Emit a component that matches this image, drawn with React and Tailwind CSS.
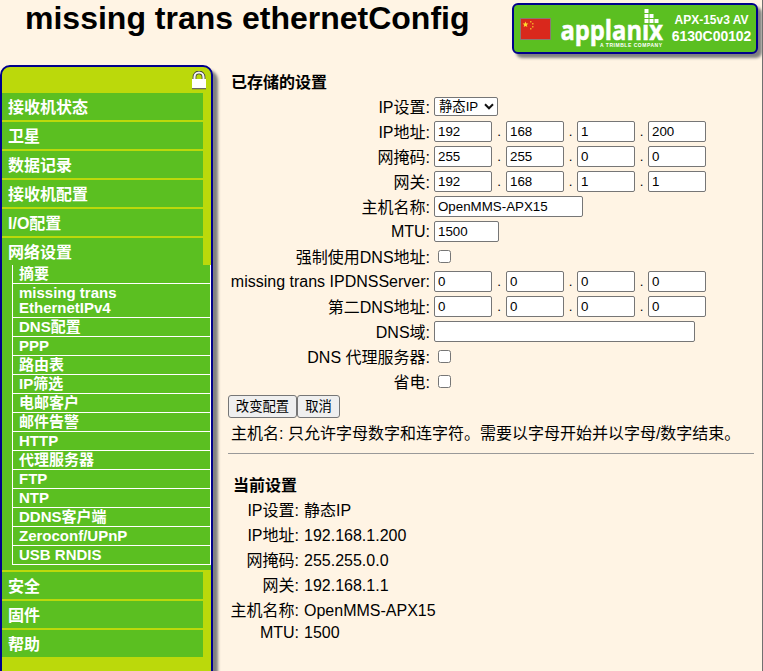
import React from "react";

const topItems = ["接收机状态", "卫星", "数据记录", "接收机配置", "I/O配置"];
const subItems = [
  "摘要",
  "missing trans EthernetIPv4",
  "DNS配置",
  "PPP",
  "路由表",
  "IP筛选",
  "电邮客户",
  "邮件告警",
  "HTTP",
  "代理服务器",
  "FTP",
  "NTP",
  "DDNS客户端",
  "Zeroconf/UPnP",
  "USB RNDIS",
];
const bottomItems = ["安全", "固件", "帮助"];

function Logo() {
  return (
    <svg className="block h-[42px] w-[106px] shrink-0 overflow-visible" viewBox="0 0 106 42" fill="#fff" aria-label="applanix">
      <text x="0.5" y="33.5" fontFamily="'Open Sans', sans-serif" fontWeight="700" fontSize="26" textLength="102.5" lengthAdjust="spacingAndGlyphs" stroke="#fff" strokeWidth="0.5">
        applanıx
      </text>
      <rect x="84.5" y="3" width="4" height="4" />
      <rect x="84.5" y="8" width="4" height="4" />
      <rect x="89.5" y="8" width="4" height="4" />
      <rect x="84.5" y="13" width="4" height="4" />
      <rect x="89.5" y="13" width="4" height="4" />
      <rect x="94.5" y="13" width="4" height="4" />
      <text x="40" y="40.5" fontFamily="'Liberation Sans', sans-serif" fontWeight="700" fontSize="5" textLength="62">
        A TRIMBLE COMPANY
      </text>
    </svg>
  );
}

function Flag() {
  return (
    <svg className="block h-[22px] w-[31px] shrink-0" viewBox="0 0 31 22">
      <rect x="0.5" y="0.5" width="30" height="21" fill="#d9281c" stroke="#8a7a72" />
      <path d="M5.5 3.5l.8 2 2.1.1-1.6 1.4.5 2.1-1.8-1.2-1.8 1.2.5-2.1-1.6-1.4 2.1-.1z" fill="#ffd92e" />
      <g fill="#f3a526">
        <rect x="10" y="3" width="1.5" height="1.5" />
        <rect x="12" y="5" width="1.5" height="1.5" />
        <rect x="12" y="8" width="1.5" height="1.5" />
        <rect x="10" y="10" width="1.5" height="1.5" />
      </g>
    </svg>
  );
}

function Lock() {
  return (
    <svg className="block h-[19px] w-[16px]" viewBox="0 0 16 19">
      <path d="M3.5 9V6a4.5 4.5 0 0 1 9 0v3" fill="none" stroke="#333" strokeWidth="3.6" />
      <path d="M3.5 9V6a4.5 4.5 0 0 1 9 0v3" fill="none" stroke="#f4f4f4" strokeWidth="2.2" />
      <rect x="1" y="8" width="14" height="10" fill="#fff" />
      <rect x="1" y="17.2" width="14" height="1" fill="#444" />
    </svg>
  );
}

function MenuItem({ children }) {
  return (
    <div className="mb-0.5 h-[27px] w-[201px] bg-[#5bbf21] pl-1.5 text-base leading-[29px] font-bold text-white">
      {children}
    </div>
  );
}

function Sidebar() {
  return (
    <nav className="h-[640px] w-[213px] shrink-0 rounded-t-[10px] border-2 border-[#00008b] bg-[#bbd90b] shadow-[5px_5px_3px_#808080]">
      <div className="flex h-[26px] justify-end pt-1 pr-1">
        <Lock />
      </div>
      {topItems.map((t) => (
        <MenuItem key={t}>{t}</MenuItem>
      ))}
      <div className="h-[27px] w-[201px] bg-[#5bbf21] pl-1.5 text-base leading-[29px] font-bold text-white">网络设置</div>
      <div className="mb-0.5 h-[305px] bg-[#5bbf21] pl-2.5">
        <ul className="w-[199px] border-r border-l border-white text-[15px] leading-[15px] font-bold text-white">
          {subItems.map((t) => (
            <li key={t} className="border-b border-white pt-px pr-16 pb-0.5 pl-1.5">
              {t}
            </li>
          ))}
        </ul>
      </div>
      {bottomItems.map((t) => (
        <MenuItem key={t}>{t}</MenuItem>
      ))}
    </nav>
  );
}

function Box({ width, children }) {
  return (
    <div
      className="h-[21px] rounded-[2px] border border-[#767676] bg-white pl-[3px] text-[13.333px] leading-[19px]"
      style={{ width }}
    >
      {children}
    </div>
  );
}

function Octets({ values }) {
  return (
    <div className="flex">
      {values.map((v, i) => (
        <React.Fragment key={i}>
          {i > 0 && <span className={i === 1 ? "w-3.5 text-center text-[13.333px] leading-[21px]" : "w-[13px] text-center text-[13.333px] leading-[21px]"}>.</span>}
          <Box width={58}>{v}</Box>
        </React.Fragment>
      ))}
    </div>
  );
}

function Check() {
  return <div className="ml-1 size-[13px] rounded-[2.5px] border border-[#767676] bg-white" />;
}

function Row({ label, latin, children }) {
  return (
    <div className="flex h-[25px] items-center">
      <div className={latin ? "-mt-px w-[202px] text-right leading-[25px]" : "w-[202px] pt-px text-right leading-[25px]"}>{label}</div>
      <div className="ml-1">{children}</div>
    </div>
  );
}

function Current({ label, value, tight }) {
  return (
    <div className={tight ? "flex h-[25px] leading-[20px]" : "flex h-[25px] leading-[25px]"}>
      <div className="w-[71px] text-right">{label}</div>
      <div className="ml-[5px]">{value}</div>
    </div>
  );
}

function Button({ width, children }) {
  return (
    <button
      className="h-[23px] rounded-[3px] border border-[#767676] bg-[#efefef] text-center text-[13.333px] leading-[22px] whitespace-nowrap"
      style={{ width }}
    >
      {children}
    </button>
  );
}

export default function App() {
  return (
    <div className="flex h-[671px] w-[763px] flex-col overflow-hidden border-r border-[#707070] bg-[#fff4e4] font-['Liberation_Sans','Noto_Sans_CJK_SC',sans-serif] text-base text-black">
      <header className="flex h-[65px] shrink-0 justify-between pr-1">
        <h1 className="pl-[25px] text-[32px] leading-[36px] font-bold whitespace-nowrap">missing trans ethernetConfig</h1>
        <div className="mt-[3px] flex h-[51px] w-[246px] rounded-[6px] border-2 border-[#00008b] bg-[#5bbf21] pl-[6px] shadow-[4px_4px_3px_#808080]">
          <div className="mt-[13px]">
            <Flag />
          </div>
          <div className="mt-px ml-[9px]">
            <Logo />
          </div>
          <div className="ml-[5px] w-[81px] pt-[7px] text-center font-bold whitespace-nowrap text-white">
            <div className="text-[12px] leading-4">APX-15v3 AV</div>
            <div className="text-[14px] leading-4 tracking-[-0.05px]">6130C00102</div>
          </div>
        </div>
      </header>
      <div className="flex min-h-0 flex-1">
        <Sidebar />
        <main className="ml-[15px] w-[526px] pt-[5px]">
          <h2 className="h-6 pl-[3px] text-base leading-[26px] font-bold">已存储的设置</h2>
          <Row label="IP设置:">
            <div className="flex h-[19px] w-16 items-center justify-between rounded-[2px] border border-[#767676] bg-white pr-[3px] pl-1 text-[13.333px] leading-[17px]">
              <span>静态IP</span>
              <svg className="h-[7px] w-[10px]" viewBox="0 0 10 7" fill="none" stroke="#111" strokeWidth="2">
                <path d="M1 1.3l4 4 4-4" />
              </svg>
            </div>
          </Row>
          <Row label="IP地址:"><Octets values={["192", "168", "1", "200"]} /></Row>
          <Row label="网掩码:"><Octets values={["255", "255", "0", "0"]} /></Row>
          <Row label="网关:"><Octets values={["192", "168", "1", "1"]} /></Row>
          <Row label="主机名称:"><Box width={149}>OpenMMS-APX15</Box></Row>
          <Row label="MTU:" latin><Box width={65}>1500</Box></Row>
          <Row label="强制使用DNS地址:"><Check /></Row>
          <Row label="missing trans IPDNSServer:" latin><Octets values={["0", "0", "0", "0"]} /></Row>
          <Row label="第二DNS地址:"><Octets values={["0", "0", "0", "0"]} /></Row>
          <Row label="DNS域:"><Box width={261} /></Row>
          <Row label="DNS 代理服务器:"><Check /></Row>
          <Row label="省电:"><Check /></Row>
          <div className="mt-px flex">
            <Button width={69}>改变配置</Button>
            <Button width={43}>取消</Button>
          </div>
          <p className="mt-[3px] h-6 pl-[3px] leading-[26px] whitespace-nowrap">主机名: 只允许字母数字和连字符。需要以字母开始并以字母/数字结束。</p>
          <hr className="mt-2 border-t border-[#999]" />
          <h2 className="mt-5 h-6 pl-[5px] text-base leading-6 font-bold">当前设置</h2>
          <Current label="IP设置:" value="静态IP" />
          <Current label="IP地址:" value="192.168.1.200" />
          <Current label="网掩码:" value="255.255.0.0" />
          <Current label="网关:" value="192.168.1.1" />
          <Current label="主机名称:" value="OpenMMS-APX15" />
          <Current label="MTU:" value="1500" tight />
        </main>
      </div>
    </div>
  );
}
